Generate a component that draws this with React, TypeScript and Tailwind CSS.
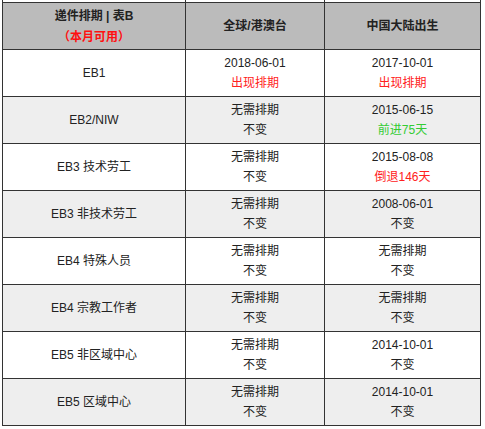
import React from 'react'

type Row = {
  name: string
  global: string
  globalNote: string
  china: string
  chinaNote: string
  chinaTone?: 'red' | 'green'
  globalTone?: 'red'
}

const rows: Row[] = [
  { name: 'EB1', global: '2018-06-01', globalNote: '出现排期', globalTone: 'red', china: '2017-10-01', chinaNote: '出现排期', chinaTone: 'red' },
  { name: 'EB2/NIW', global: '无需排期', globalNote: '不变', china: '2015-06-15', chinaNote: '前进75天', chinaTone: 'green' },
  { name: 'EB3 技术劳工', global: '无需排期', globalNote: '不变', china: '2015-08-08', chinaNote: '倒退146天', chinaTone: 'red' },
  { name: 'EB3 非技术劳工', global: '无需排期', globalNote: '不变', china: '2008-06-01', chinaNote: '不变' },
  { name: 'EB4 特殊人员', global: '无需排期', globalNote: '不变', china: '无需排期', chinaNote: '不变' },
  { name: 'EB4 宗教工作者', global: '无需排期', globalNote: '不变', china: '无需排期', chinaNote: '不变' },
  { name: 'EB5 非区域中心', global: '无需排期', globalNote: '不变', china: '2014-10-01', chinaNote: '不变' },
  { name: 'EB5 区域中心', global: '无需排期', globalNote: '不变', china: '2014-10-01', chinaNote: '不变' },
]

function toneClass(tone?: 'red' | 'green') {
  if (tone === 'red') return 'text-[#ff2020]'
  if (tone === 'green') return 'text-[#33cc33]'
  return ''
}

function Cell({ children, className = '' }: { children: React.ReactNode; className?: string }) {
  return (
    <div className={`flex flex-col items-center justify-center border-l border-[#333] text-center ${className}`}>
      {children}
    </div>
  )
}

export default function App() {
  return (
    <div
      className="min-h-[429px] w-[485px] bg-white text-[12px] leading-[20px] text-[#222]"
      style={{ fontFamily: '"Liberation Sans", Arial, "Noto Sans CJK SC", sans-serif' }}
    >
      <div className="ml-[2px] w-[479px]">
        {/* tail of the table above */}
        <div className="flex h-[2px]">
          <div className="w-[183px] border-l border-[#333]" />
          <div className="w-[139px] border-l border-[#333]" />
          <div className="w-[157px] border-x border-[#333]" />
        </div>

        {/* header */}
        <div className="flex h-[47px] border-t border-[#333] bg-[#bbbbbb] font-bold">
          <Cell className="w-[183px] pb-[1px]">
            <span className="leading-[19px]">递件排期 | 表B</span>
            <span className="leading-[19px] text-[#ff1010] [font-family:'Noto_Sans_CJK_SC',sans-serif] [font-feature-settings:'fwid'] [text-spacing-trim:space-all]">
              （本月可用）
            </span>
          </Cell>
          <Cell className="w-[139px]">全球/港澳台</Cell>
          <Cell className="w-[157px] border-r">中国大陆出生</Cell>
        </div>

        {rows.map((r, i) => (
          <div
            key={r.name}
            className={`flex h-[47px] border-t border-[#333] ${i % 2 === 1 ? 'bg-[#eeeeee]' : 'bg-white'} ${
              i === rows.length - 1 ? 'h-[48px] border-b' : ''
            }`}
          >
            <Cell className="w-[183px]">{r.name}</Cell>
            <Cell className="w-[139px]">
              <span>{r.global}</span>
              <span className={toneClass(r.globalTone)}>{r.globalNote}</span>
            </Cell>
            <Cell className="w-[157px] border-r">
              <span>{r.china}</span>
              <span className={toneClass(r.chinaTone)}>{r.chinaNote}</span>
            </Cell>
          </div>
        ))}
      </div>
    </div>
  )
}
